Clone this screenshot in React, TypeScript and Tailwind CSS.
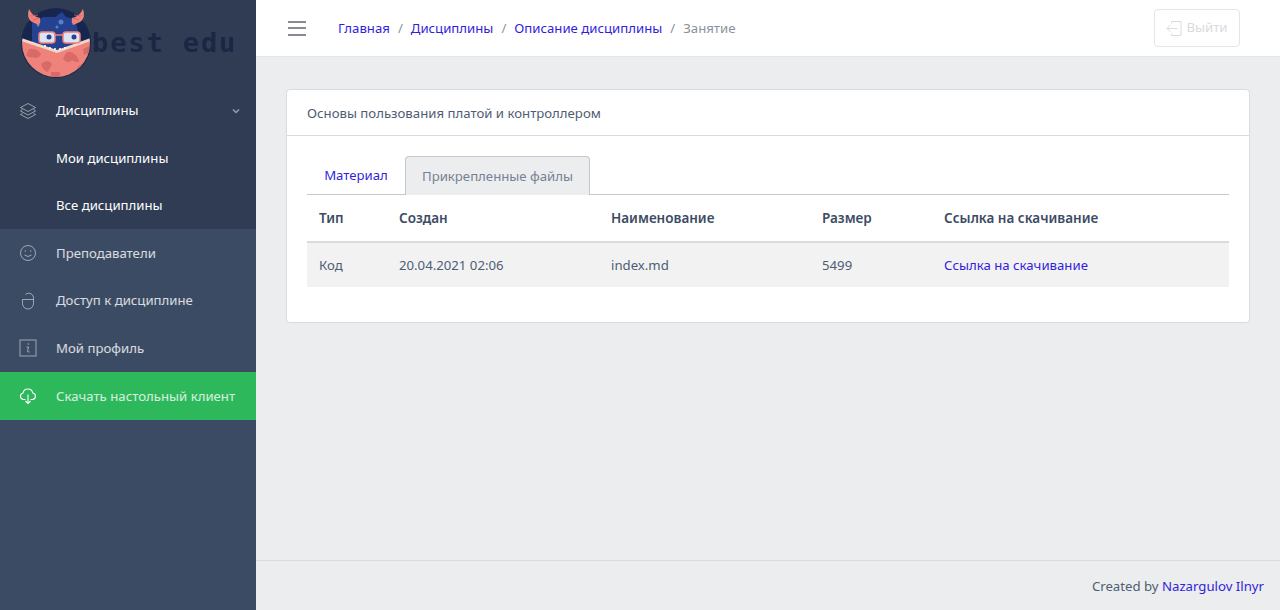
const font = { fontFamily: '"Noto Sans", sans-serif' };

const Logo = () => (
  <svg width="76" height="80" viewBox="0 0 76 80" className="shrink-0">
    <defs>
      <clipPath id="round">
        <circle cx="35" cy="42" r="34" />
      </clipPath>
    </defs>
    <circle cx="35" cy="42" r="35" fill="#17264f" />
    <g clipPath="url(#round)">
      <path d="M11 60 V22 L22 16 L34 16 L41 11 L45 16 L54 18 L57 30 L59 60 Z" fill="#24428f" />
      <path d="M0 39 L36 51 L70 39 V80 H0 Z" fill="#ef837b" />
      <path d="M0 37 L36 49 L70 37 L70 40 L36 52 L0 40 Z" fill="#f0d8c8" />
      <path d="M8 48 q8 -1 12 5 q-3 6 -8 3 q-5 1 -7 -2 Z M20 63 q7 -6 11 0 q-3 7 -5 8 q-5 -3 -6 -8 Z M42 58 q3 -9 8 -7 q7 3 8 10 q-5 0 -7 -2 q-4 5 -9 -1 Z M3 61 q5 2 6 8 l-5 2 Z M62 48 l6 -3 v7 l-5 2 Z M30 71 h9 v7 h-9 Z M56 66 l5 -3 l-2 8 Z" fill="#d96a68" />
      <circle cx="40" cy="21" r="2.500" fill="#5d7ec7" />
      <circle cx="36" cy="26" r="1.500" fill="#5d7ec7" />
      <circle cx="17" cy="24" r="1.500" fill="#5d7ec7" />
    </g>
    <path d="M8 8 q-3 9 3 13 l7 3 q2 -3 1 -7 q-7 -1 -11 -9 Z" fill="#ef837b" />
    <path d="M10 15 l7 -1 M12 19 l6 -2" stroke="#c9615f" strokeWidth="0.800" />
    <path d="M62 8 q3 9 -3 13 l-7 3 q-2 -3 -1 -7 q7 -1 11 -9 Z" fill="#ef837b" />
    <path d="M60 15 l-7 -1 M58 19 l-6 -2" stroke="#c9615f" strokeWidth="0.800" />
    <rect x="18" y="31" width="16" height="11" rx="3" fill="#dbe3f4" stroke="#ef837b" strokeWidth="1.500" />
    <rect x="42" y="31" width="17" height="11" rx="3" fill="#dbe3f4" stroke="#ef837b" strokeWidth="1.500" />
    <path d="M34 34 h8" stroke="#ef837b" strokeWidth="1.500" />
    <circle cx="28" cy="36" r="2.500" fill="#24428f" />
    <circle cx="53" cy="36" r="2.500" fill="#24428f" />
    <path d="M23 45 h2 M28 47 h2 M33 48 h2 M38 48 h2 M43 47 h2" stroke="#ffffff" strokeWidth="1.500" />
  </svg>
);

const IconLayers = () => (
  <svg width="18" height="18" viewBox="0 0 18 18" fill="none" stroke="currentColor" strokeWidth="1">
    <path d="M9 1.500 L16.500 5.500 L9 9.500 L1.500 5.500 Z" />
    <path d="M3.500 7.500 L1.500 9 L9 13 L16.500 9 L14.500 7.500" />
    <path d="M3.500 11 L1.500 12.500 L9 16.500 L16.500 12.500 L14.500 11" />
  </svg>
);

const IconSmile = () => (
  <svg width="18" height="18" viewBox="0 0 18 18" fill="none" stroke="currentColor" strokeWidth="1">
    <circle cx="9" cy="9" r="7.500" />
    <circle cx="6.300" cy="7" r="0.700" fill="currentColor" stroke="none" />
    <circle cx="11.700" cy="7" r="0.700" fill="currentColor" stroke="none" />
    <path d="M5.500 11 q3.500 3 7 0" />
  </svg>
);

const IconMouse = () => (
  <svg width="18" height="18" viewBox="0 0 18 18" fill="none" stroke="currentColor" strokeWidth="1">
    <path d="M6.500 2.500 Q8 1 10 1.200 Q14.500 1.800 14.500 6.500 V11.500 A5.500 5.500 0 0 1 3.500 11.500 V7.500 H14.500" />
  </svg>
);

const IconInfo = () => (
  <svg width="18" height="18" viewBox="0 0 18 18" fill="none" stroke="currentColor" strokeWidth="1">
    <rect x="1" y="1" width="16" height="16" />
    <circle cx="9.300" cy="5" r="0.800" fill="currentColor" stroke="none" />
    <path d="M7.500 8 H9.500 L8.500 12.500 Q8.400 13.400 10.500 12.800" />
  </svg>
);

const IconCloud = () => (
  <svg width="18" height="18" viewBox="0 0 18 18" fill="none" stroke="currentColor" strokeWidth="1.100">
    <path d="M6.500 12.500 H4.500 A3.300 3.300 0 0 1 4 6 A5 5 0 0 1 13.800 6 A3.300 3.300 0 0 1 13.500 12.500 H11.500" />
    <path d="M9 7.500 V16.500 M6.500 14 L9 16.500 L11.500 14" />
  </svg>
);

const IconLogout = () => (
  <svg width="17" height="17" viewBox="0 0 17 17" fill="none" stroke="currentColor" strokeWidth="1">
    <path d="M5.500 3.500 V1.500 H15 V15.500 H5.500 V13.500" />
    <path d="M11.500 8.500 H1 M4.500 5 L1 8.500 L4.500 12" />
  </svg>
);

const Item = ({ icon, label }: { icon: React.ReactNode; label: string }) => (
  <a className="flex h-[47.5px] items-center pt-[1px] text-white/80">
    <span className="flex w-[56px] shrink-0 justify-center pr-[1px] text-white/50">{icon}</span>
    <span>{label}</span>
  </a>
);

const Sidebar = () => (
  <aside className="flex w-[256px] shrink-0 flex-col bg-[#3c4b64]">
    <div className="flex h-[86.5px] items-start overflow-hidden bg-[#303c54] pl-[21px] pt-[1px]">
      <Logo />
      <span
        className="ml-[-5px] mt-[27px] text-[27px] font-bold leading-[30px] tracking-[1.9px] text-[#1a2744]"
        style={{ fontFamily: '"DejaVu Sans Mono", monospace' }}
      >
        best edu
      </span>
    </div>
    <nav>
      <div className="bg-[#303c54] text-white">
        <a className="flex h-[47.5px] items-center pt-[1px]">
          <span className="flex w-[56px] shrink-0 justify-center pr-[1px] text-white/50">
            <IconLayers />
          </span>
          <span>Дисциплины</span>
          <svg width="10" height="10" viewBox="0 0 10 10" className="ml-auto mr-[15px] text-white/50" fill="none" stroke="currentColor" strokeWidth="1.500">
            <path d="M2 3.500 L5 6.500 L8 3.500" />
          </svg>
        </a>
        <a className="flex h-[47.5px] items-center pl-[56px] pt-[1px]">Мои дисциплины</a>
        <a className="flex h-[47.5px] items-center pl-[56px] pt-[1px]">Все дисциплины</a>
      </div>
      <Item icon={<IconSmile />} label="Преподаватели" />
      <Item icon={<IconMouse />} label="Доступ к дисциплине" />
      <Item icon={<IconInfo />} label="Мой профиль" />
      <a className="flex h-[48px] items-center bg-[#2eb85c] pt-[1px] text-white/80">
        <span className="flex w-[56px] shrink-0 justify-center pr-[1px] text-white">
          <IconCloud />
        </span>
        <span>Скачать настольный клиент</span>
      </a>
    </nav>
  </aside>
);

const Header = () => (
  <header className="flex h-[57px] shrink-0 items-center border-b border-[#e4e6ea] bg-white pl-[32px] pr-[40px]">
    <span className="flex w-[18px] flex-col gap-[4.500px]">
      <i className="h-[2px] bg-[#8a8a92]" />
      <i className="h-[2px] bg-[#8a8a92]" />
      <i className="h-[2px] bg-[#8a8a92]" />
    </span>
    <ol className="ml-[32px] flex items-center gap-[8px] pt-[1px]">
      <li className="text-[#321fdb]">Главная</li>
      <li className="text-[#8a93a2]">/</li>
      <li className="text-[#321fdb]">Дисциплины</li>
      <li className="text-[#8a93a2]">/</li>
      <li className="text-[#321fdb]">Описание дисциплины</li>
      <li className="text-[#8a93a2]">/</li>
      <li className="text-[#8a93a2]">Занятие</li>
    </ol>
    <button className="ml-auto flex h-[38px] w-[86px] items-center justify-center gap-[3px] rounded-[4px] border border-[#e3e5e9] text-[#d8dbe0]">
      <IconLogout />
      <span className="pb-[1px]">Выйти</span>
    </button>
  </header>
);

const FilesTable = () => (
  <table className="w-full table-fixed border-collapse">
    <colgroup>
      <col className="w-[80px]" />
      <col className="w-[212px]" />
      <col className="w-[211px]" />
      <col className="w-[122px]" />
      <col />
    </colgroup>
    <thead>
      <tr className="h-[47px] border-b-2 border-[#d8dbe0] text-left text-[13.5px] text-[#3c4b64]">
        <th className="px-[12px] font-semibold">Тип</th>
        <th className="px-[12px] font-semibold">Создан</th>
        <th className="px-[12px] font-semibold">Наименование</th>
        <th className="px-[12px] font-semibold">Размер</th>
        <th className="px-[12px] font-semibold">Ссылка на скачивание</th>
      </tr>
    </thead>
    <tbody>
      <tr className="h-[45px] bg-[#f2f2f3]">
        <td className="px-[12px]">Код</td>
        <td className="px-[12px]">20.04.2021 02:06</td>
        <td className="px-[12px]">index.md</td>
        <td className="px-[12px]">5499</td>
        <td className="px-[12px] text-[#321fdb]">Ссылка на скачивание</td>
      </tr>
    </tbody>
  </table>
);

const Card = () => (
  <section className="rounded-[4px] border border-[#d8dbe0] bg-white">
    <div className="flex h-[46px] items-center border-b border-[#d8dbe0] px-[20px] pt-[1px]">
      Основы пользования платой и контроллером
    </div>
    <div className="px-[20px] pb-[35px] pt-[20px]">
      <div className="flex h-[39px] border-b border-[#c4c9d0]">
        <a className="flex w-[98px] items-center justify-center text-[#321fdb]">Материал</a>
        <a className="mb-[-1px] flex w-[185px] items-center justify-center rounded-t-[4px] border border-b-0 border-[#c4c9d0] bg-[#ebedef] text-[#768192]">
          Прикрепленные файлы
        </a>
      </div>
      <FilesTable />
    </div>
  </section>
);

export default function App() {
  return (
    <div className="flex h-[610px] w-[1280px] overflow-hidden bg-[#ebedef] text-[13.2px] leading-[21px] text-[#4f5d73]" style={font}>
      <Sidebar />
      <main className="flex min-w-0 flex-1 flex-col">
        <Header />
        <div className="flex-1 px-[30px] pt-[32px]">
          <Card />
        </div>
        <footer className="flex h-[50px] shrink-0 items-center justify-end border-t border-[#d8dbe0] pr-[16px] pt-[1px]">
          <span>Created by&nbsp;</span>
          <span className="text-[#321fdb]">Nazargulov Ilnyr</span>
        </footer>
      </main>
    </div>
  );
}
